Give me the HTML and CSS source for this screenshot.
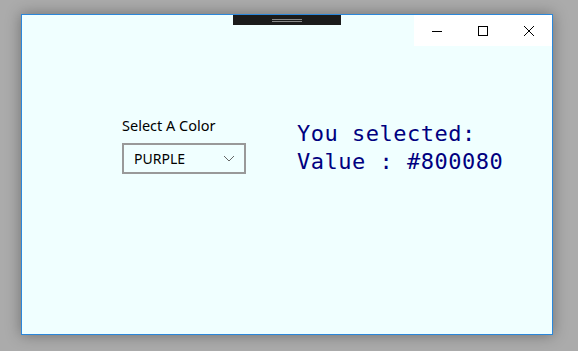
FILE: index.html
```html
<!DOCTYPE html>
<html>
<head>
<meta charset="utf-8">
<link rel="stylesheet" href="styles.css">
</head>
<body>
<div class="window">
  <div class="titlebar">
    <div class="spacer"></div>
    <div class="grip"><span></span><span></span></div>
    <div class="spacer2"></div>
    <div class="caption">
      <div class="cbtn"><svg width="12" height="12" viewBox="0 0 12 12"><path d="M1 6.5h10" stroke="#000" stroke-width="1"/></svg></div>
      <div class="cbtn"><svg width="12" height="12" viewBox="0 0 12 12"><rect x="1.5" y="1.5" width="9" height="9" fill="none" stroke="#000" stroke-width="1"/></svg></div>
      <div class="cbtn"><svg width="12" height="12" viewBox="0 0 12 12"><path d="M1 1L11 11M11 1L1 11" stroke="#000" stroke-width="1"/></svg></div>
    </div>
  </div>
  <div class="content">
    <div class="picker">
      <div class="label">Select A Color</div>
      <div class="combo">
        <span>PURPLE</span>
        <svg width="12" height="7" viewBox="0 0 12 7"><path d="M1 1l5 5 5-5" fill="none" stroke="#666" stroke-width="1"/></svg>
      </div>
    </div>
    <div class="result">
      <div>You selected:</div>
      <div>Value : #800080</div>
    </div>
  </div>
</div>
</body>
</html>
```
FILE: styles.css
```css
html, body { margin: 0; padding: 0; }
body {
  background: #ababab;
  width: 578px;
  height: 351px;
  padding: 14px 0 0 21px;
  box-sizing: border-box;
  font-family: "Segoe UI", "Noto Sans", "Open Sans", sans-serif;
}
.window {
  width: 532px;
  height: 321px;
  box-sizing: border-box;
  border: 1px solid #2b87da;
  background: #f0ffff;
  box-shadow: 0 0 14px rgba(0,0,0,0.35);
  display: flex;
  flex-direction: column;
}
.titlebar {
  display: flex;
  height: 31px;
}
.spacer { width: 211px; }
.grip {
  width: 108px;
  height: 10px;
  background: #1b1b1b;
  display: flex;
  flex-direction: column;
  align-items: center;
  justify-content: center;
  gap: 1px;
}
.grip span {
  display: block;
  width: 30px;
  height: 1px;
  background: #888;
}
.spacer2 { flex: 1; }
.caption {
  width: 138px;
  height: 31px;
  background: #ffffff;
  display: flex;
}
.cbtn {
  width: 46px;
  display: flex;
  align-items: center;
  justify-content: center;
}
.cbtn svg { display: block; }
.content {
  display: flex;
  padding: 69px 0 0 100px;
}
.picker {
  display: flex;
  flex-direction: column;
  width: 175px;
}
.label {
  font-size: 14.5px;
  color: #000;
  line-height: 20px;
  height: 28px;
}
.combo {
  width: 124px;
  height: 31px;
  box-sizing: border-box;
  border: 2px solid #999999;
  display: flex;
  align-items: center;
  justify-content: space-between;
  padding: 0 9px 0 10px;
  font-size: 14px;
  color: #000;
}
.combo svg { display: block; }
.result {
  font-family: "DejaVu Sans Mono", "Liberation Mono", monospace;
  font-size: 22px;
  letter-spacing: 0.5px;
  line-height: 28px;
  color: #000080;
  padding-top: 5px;
}
```
